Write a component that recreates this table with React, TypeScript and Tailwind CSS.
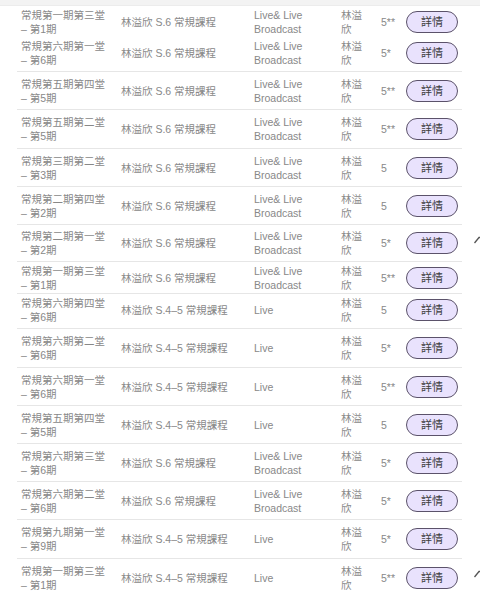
type Row = {
  title: string
  term: string
  course: string
  mode: "llb" | "live"
  grade: string
  h: string
  pb?: string
  arrow?: boolean
  divider?: boolean
}

const rows: Row[] = [
  { title: "常規第一期第三堂", term: "– 第1期", course: "S.6", mode: "llb", grade: "5**", h: "h-[31px]", divider: false },
  { title: "常規第六期第一堂", term: "– 第6期", course: "S.6", mode: "llb", grade: "5*", h: "h-[35px]", pb: "pb-[3px]" },
  { title: "常規第五期第四堂", term: "– 第5期", course: "S.6", mode: "llb", grade: "5**", h: "h-[38px]" },
  { title: "常規第五期第二堂", term: "– 第5期", course: "S.6", mode: "llb", grade: "5**", h: "h-[39px]" },
  { title: "常規第三期第二堂", term: "– 第3期", course: "S.6", mode: "llb", grade: "5", h: "h-[38px]" },
  { title: "常規第二期第四堂", term: "– 第2期", course: "S.6", mode: "llb", grade: "5", h: "h-[38px]" },
  { title: "常規第二期第一堂", term: "– 第2期", course: "S.6", mode: "llb", grade: "5*", h: "h-[37px]", arrow: true },
  { title: "常規第一期第三堂", term: "– 第1期", course: "S.6", mode: "llb", grade: "5**", h: "h-[32px]" },
  { title: "常規第六期第四堂", term: "– 第6期", course: "S.4–5", mode: "live", grade: "5", h: "h-[35px]", pb: "pb-[3px]" },
  { title: "常規第六期第二堂", term: "– 第6期", course: "S.4–5", mode: "live", grade: "5*", h: "h-[39px]" },
  { title: "常規第六期第一堂", term: "– 第6期", course: "S.4–5", mode: "live", grade: "5**", h: "h-[38px]" },
  { title: "常規第五期第四堂", term: "– 第5期", course: "S.4–5", mode: "live", grade: "5", h: "h-[38px]" },
  { title: "常規第六期第三堂", term: "– 第6期", course: "S.6", mode: "llb", grade: "5*", h: "h-[38px]" },
  { title: "常規第六期第二堂", term: "– 第6期", course: "S.6", mode: "llb", grade: "5*", h: "h-[38px]" },
  { title: "常規第九期第一堂", term: "– 第9期", course: "S.4–5", mode: "live", grade: "5*", h: "h-[39px]" },
  { title: "常規第一期第三堂", term: "– 第1期", course: "S.4–5", mode: "live", grade: "5**", h: "h-[38px]", arrow: true },
]

const Arrow = () => (
  <svg className="absolute right-0 top-1/2 -translate-y-[8px]" width="6" height="8" viewBox="0 0 6 8">
    <polyline points="0.5,7 5,1.5 6,1.5" fill="none" stroke="#555" strokeWidth="1.3" />
  </svg>
)

const CourseRow = ({ r, last }: { r: Row; last: boolean }) => (
  <div className="relative">
    <div
      className={`ml-[17px] w-[445px] pl-[4px] grid grid-cols-[100px_133px_87px_40px_25px_52px] items-center ${r.h} ${r.pb ?? ""} ${
        r.divider === false || last ? "" : "border-b border-[#e6e6e6]"
      }`}
    >
      <div className="flex flex-col">
        <span>{r.title}</span>
        <span>{r.term}</span>
      </div>
      <div>林溢欣 {r.course} 常規課程</div>
      <div className="flex flex-col">
        {r.mode === "llb" ? (
          <>
            <span>Live&amp; Live</span>
            <span>Broadcast</span>
          </>
        ) : (
          <span>Live</span>
        )}
      </div>
      <div className="max-w-[22px]">林溢欣</div>
      <div>{r.grade}</div>
      <button className="h-[22px] w-[52px] rounded-full border-[1.5px] border-[#5b526a] bg-[#e9e2fd] text-[11px] text-[#3d3d3d]">
        詳情
      </button>
    </div>
    {r.arrow && <Arrow />}
  </div>
)

export default function App() {
  return (
    <div
      className="w-[480px] h-[594px] overflow-hidden bg-white text-[10.5px] leading-[14px] text-[#888]"
      style={{ fontFamily: '"Liberation Sans", "Noto Sans CJK TC", sans-serif' }}
    >
      <div className="h-[6px] bg-[#f3f3f3] border-b border-[#ececec]" />
      {rows.map((r, i) => (
        <CourseRow key={i} r={r} last={i === rows.length - 1} />
      ))}
    </div>
  )
}
